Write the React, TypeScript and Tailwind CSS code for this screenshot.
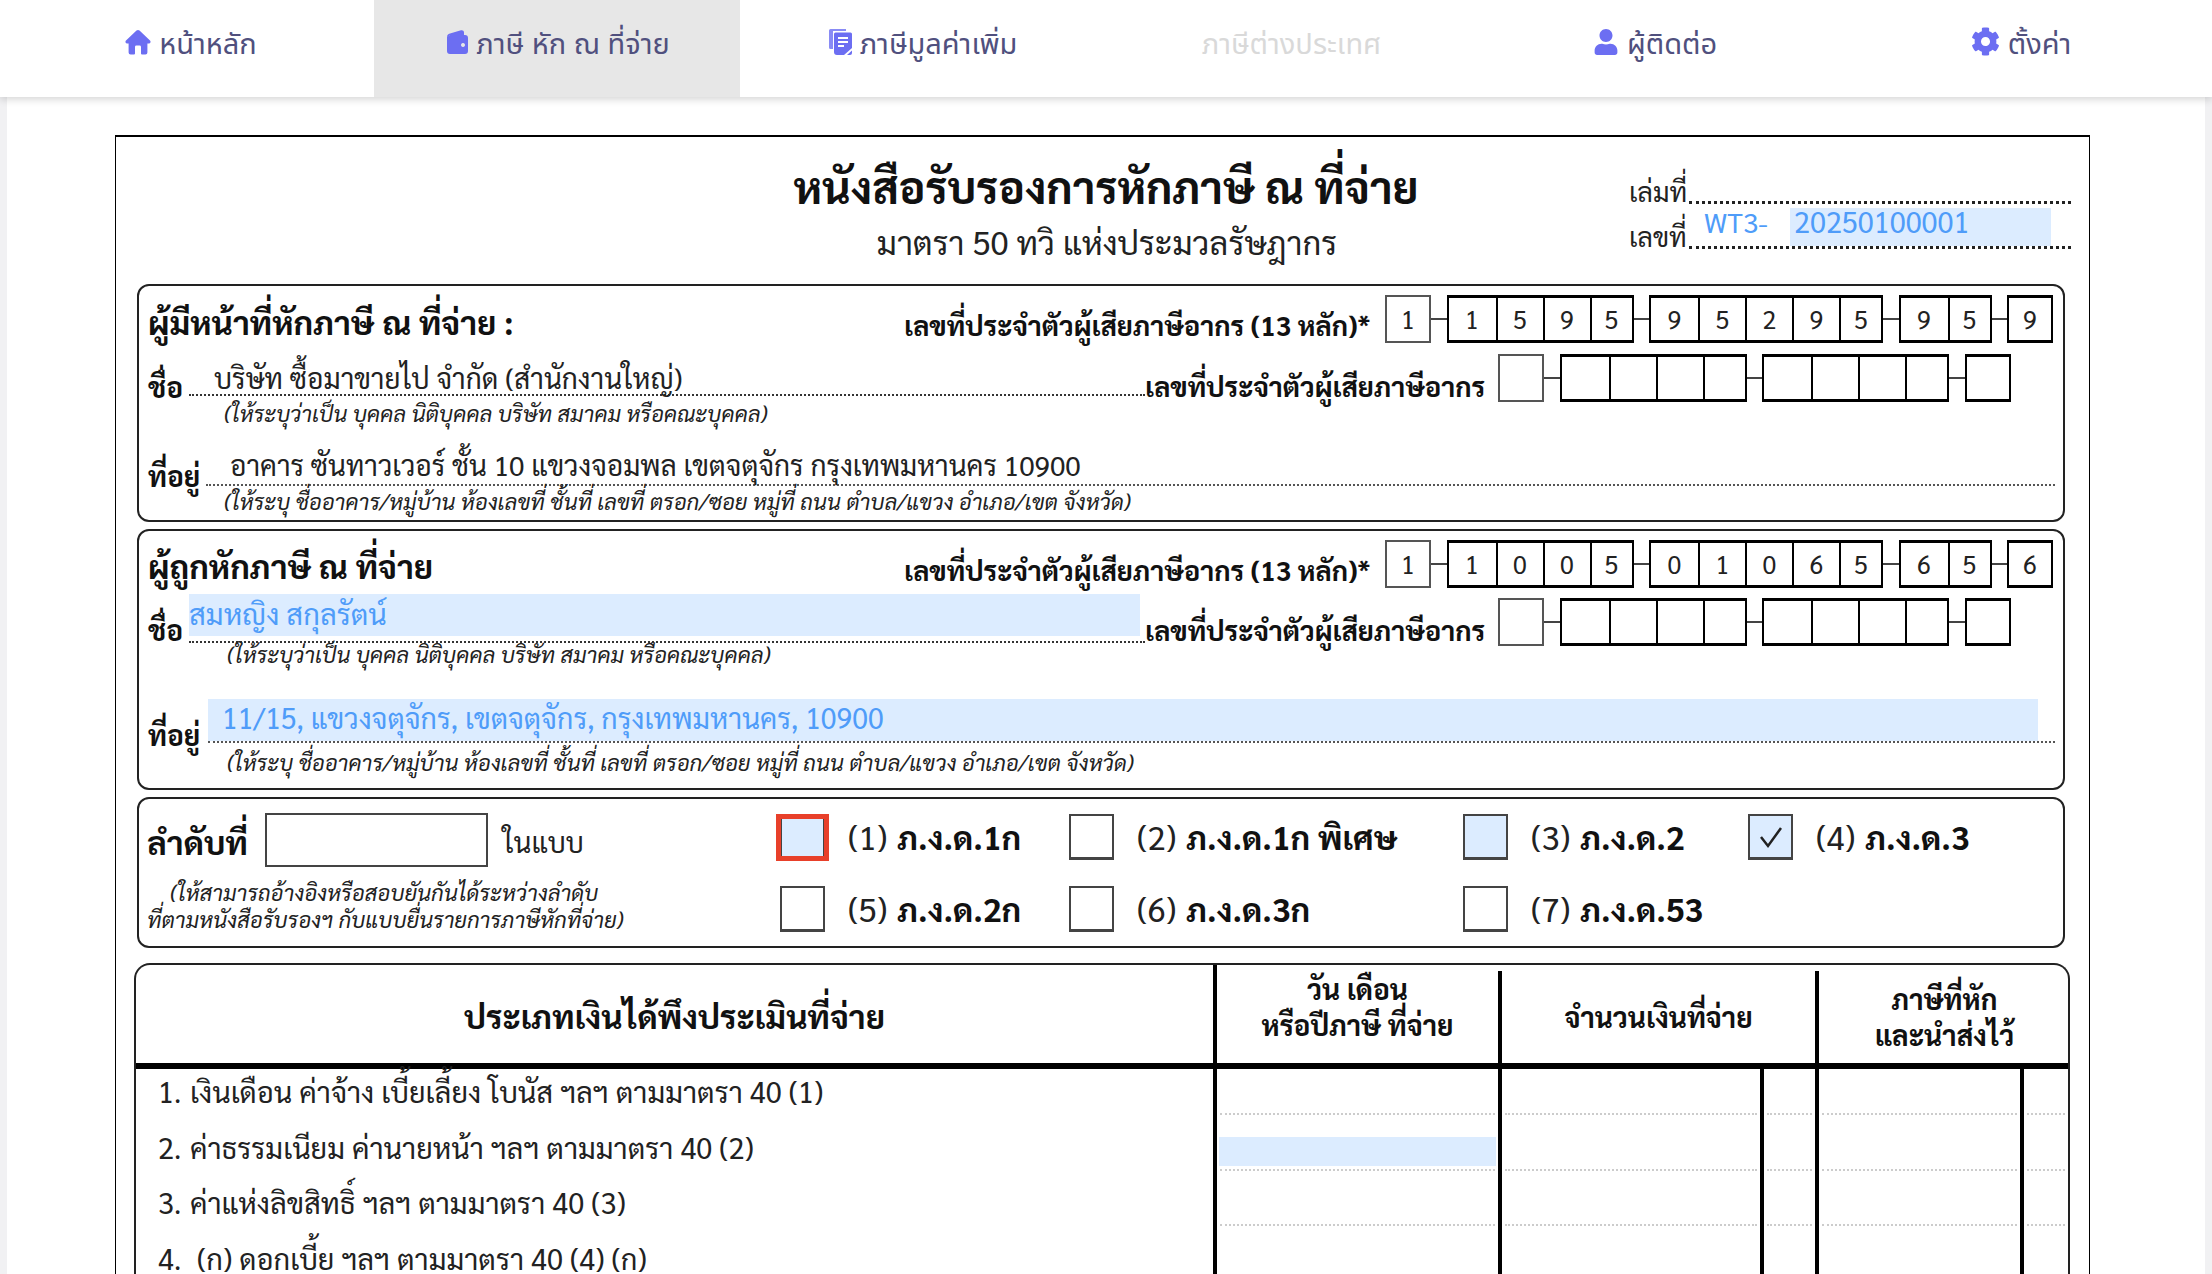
import { FaCog, FaUser } from 'react-icons/fa'

const formFont = { fontFamily: '"Sarabun", "Noto Sans", sans-serif' }
const navFont = { fontFamily: '"Noto Sans Thai", "Noto Sans", sans-serif' }

function HomeIcon() {
  return (
    <svg viewBox="0 0 26 26" className="h-[26px] w-[26px]" fill="#6c6ef2">
      <path d="M11.5 1.6 a2.2 2.2 0 0 1 3 0 L25 11.6 a1.6 1.6 0 0 1 -1.1 2.8 H22.4 V23.6 a2 2 0 0 1 -2 2 H17 a1 1 0 0 1 -1 -1 V18 a1.4 1.4 0 0 0 -1.4 -1.4 H11.4 A1.4 1.4 0 0 0 10 18 V24.6 a1 1 0 0 1 -1 1 H5.6 a2 2 0 0 1 -2 -2 V14.4 H2.1 A1.6 1.6 0 0 1 1 11.6 Z" />
    </svg>
  )
}

function WalletIcon() {
  return (
    <svg viewBox="0 0 21 24" className="h-[24px] w-[21px]" fill="#6c6ef2">
      <path d="M0 7 C0 5 1 4 3 3.4 L14 0.3 C15.6 -0.1 17 0.8 17 2.5 V5 H3.5 C2.5 5 2 5.6 2.5 6 Z" />
      <path fillRule="evenodd" d="M3 5 H18 a3 3 0 0 1 3 3 V21 a3 3 0 0 1 -3 3 H3 a3 3 0 0 1 -3 -3 V7 Z M16 13 a2 2 0 1 0 0.01 0 Z" />
    </svg>
  )
}

function DocsIcon() {
  return (
    <svg viewBox="0 0 23 26" className="h-[26px] w-[23px]" fill="#6c6ef2">
      <path d="M1.5 0 H17 V2 H4 V20 H1.5 A1.5 1.5 0 0 1 0 18.5 V1.5 A1.5 1.5 0 0 1 1.5 0 Z" opacity="0.8" />
      <path fillRule="evenodd" d="M6.5 3.5 H21.5 A1.5 1.5 0 0 1 23 5 V19 L15 26 H8 A3 3 0 0 1 5 23 V5 A1.5 1.5 0 0 1 6.5 3.5 Z M9 8 V10 H19 V8 Z M9 12 V14 H19 V12 Z M9 16 V18 H15 V16 Z" />
      <path d="M18 26 L23 21.5 V24 A2 2 0 0 1 21 26 Z" />
    </svg>
  )
}

const tabs = [
  { label: 'หน้าหลัก', icon: <HomeIcon /> },
  { label: 'ภาษี หัก ณ ที่จ่าย', icon: <WalletIcon />, active: true },
  { label: 'ภาษีมูลค่าเพิ่ม', icon: <DocsIcon /> },
  { label: 'ภาษีต่างประเทศ', disabled: true },
  { label: 'ผู้ติดต่อ', icon: <FaUser className="text-[26px] text-[#6c6ef2]" /> },
  { label: 'ตั้งค่า', icon: <FaCog className="text-[29px] text-[#6c6ef2]" /> },
]

function DigitBoxes({ groups, digits }: { groups: number[]; digits: string }) {
  let at = 0
  return (
    <div className="flex items-center">
      {groups.map((n, i) => {
        const chunk = digits.slice(at, at + n).padEnd(n, ' ')
        at += n
        return (
          <div key={i} className="flex items-center">
            {i > 0 && <div className="h-[2px] w-[15.5px] bg-[#444]" />}
            <div
              className={
                i === 0
                  ? 'flex h-[48px] border-2 border-[#555]'
                  : 'flex h-[48px] border-x-2 border-y-[3px] border-black'
              }
            >
              {chunk.split('').map((d, j) => (
                <div
                  key={j}
                  className={`flex items-center justify-center text-[25px] text-[#222] ${j === n - 1 ? 'w-[42px]' : 'w-[47px]'} ${j > 0 ? 'border-l-2 border-black' : ''}`}
                >
                  {d}
                </div>
              ))}
            </div>
          </div>
        )
      })}
    </div>
  )
}

function Hint({ text, left }: { text: string; left: string }) {
  return <div className={`text-[22px] italic leading-[30px] text-[#222] ${left}`}>{text}</div>
}

function Check({ label, sub, blue, checked, focus }: { label: string; sub: string; blue?: boolean; checked?: boolean; focus?: boolean }) {
  return (
    <div className="flex items-center">
      <div className="relative">
        <div
          className={`flex h-[46px] w-[45px] items-center justify-center border-2 border-b-[3px] border-[#444] ${blue ? 'bg-[#dcecff]' : 'bg-white'}`}
        >
          {checked && (
            <svg viewBox="0 0 30 30" className="h-[30px] w-[30px]" fill="none" stroke="#222" strokeWidth="2.5">
              <path d="M5 15 L12 24 L25 6" />
            </svg>
          )}
        </div>
        {focus && <div className="absolute -inset-x-[4px] top-0 -bottom-[1px] border-[5px] border-[#e8402a]" />}
      </div>
      <span className="ml-[23px] text-[33px] leading-[46px] text-[#222]">{label}</span>
      <span className="ml-[10px] text-[33px] font-bold leading-[46px] text-[#111]">{sub}</span>
    </div>
  )
}

function Row({ no, text, cell, h }: { no: string; text: string; cell?: boolean; h: string }) {
  const dots = 'border-b-2 border-dotted border-[#ccc]'
  return (
    <div className={`flex ${h}`}>
      <div className="flex w-[1077px] items-end pb-[4px] pl-[22px] text-[29px] leading-[40px] text-[#222]">
        <span className="w-[32px]">{no}</span>
        <span className="whitespace-pre">{text}</span>
      </div>
      <div className="flex w-[285px] flex-col justify-end border-l-[4px] border-black px-[3px]">
        {cell && <div className="-mx-[1px] mb-[3px] h-[29px] bg-[#dcecff]" />}
        <div className={dots} />
      </div>
      <div className="flex w-[262px] flex-col justify-end border-l-[4px] border-black px-[3px]">
        <div className={dots} />
      </div>
      <div className="flex w-[55px] flex-col justify-end border-l-[4px] border-black px-[3px]">
        <div className={dots} />
      </div>
      <div className="flex w-[205px] flex-col justify-end border-l-[4px] border-black px-[3px]">
        <div className={dots} />
      </div>
      <div className="flex flex-1 flex-col justify-end border-l-[4px] border-black px-[3px]">
        <div className={dots} />
      </div>
    </div>
  )
}

export default function App() {
  return (
    <div className="flex h-screen flex-col overflow-hidden bg-[#f1f1f3] text-black" style={formFont}>
      <nav className="z-10 flex h-[97px] shrink-0 bg-white px-[8px] shadow-[0_2px_8px_rgba(0,0,0,0.18)]" style={navFont}>
        {tabs.map((t) => (
          <div
            key={t.label}
            className={`flex w-[366px] items-center justify-center gap-[8px] pb-[6px] text-[29px] ${t.active ? 'bg-[#e7e7e7] pl-[3px]' : ''} ${t.disabled ? 'pl-[5px] text-[#d9d9d9]' : 'text-[#50507e]'}`}
          >
            {t.icon && <span className="-mt-[8px]">{t.icon}</span>}
            <span>{t.label}</span>
          </div>
        ))}
      </nav>

      <main className="mx-[7px] flex-1 overflow-hidden bg-white pl-[108px] pt-[38px]">
        <div className="h-[1200px] w-[1975px] border border-t-2 border-black">
          <header className="flex h-[147px]">
            <div className="ml-[467px] flex w-[1046px] flex-col items-center">
              <h1 className="mt-[19px] text-[44.3px] font-bold leading-[60px] text-[#111]">หนังสือรับรองการหักภาษี ณ ที่จ่าย</h1>
              <p className="mt-[4px] pl-[2px] text-[32.8px] leading-[44px] text-[#222]">มาตรา 50 ทวิ แห่งประมวลรัษฎากร</p>
            </div>
            <div className="w-[442px] pt-[30px] text-[27px] text-[#222]">
              <div className="flex h-[37px] items-end">
                <span className="w-[60px] translate-y-[4px] leading-[34px]">เล่มที่</span>
                <div className="flex-1 border-b-[3px] border-dotted border-[#222]" />
              </div>
              <div className="flex h-[45px] items-end">
                <span className="w-[60px] translate-y-[4px] leading-[34px]">เลขที่</span>
                <div className="flex h-full flex-1 border-b-[3px] border-dotted border-[#222] pl-[15px] pt-[4px] text-[#4f9cf9]">
                  <span className="w-[86px] text-[28px] leading-[26px]">WT3-</span>
                  <span className="h-[38px] w-[261px] bg-[#dcecff] pl-[4px] text-[29px] leading-[26px]">20250100001</span>
                </div>
              </div>
            </div>
          </header>

          {/* ผู้จ่าย */}
          <section className="ml-[21px] h-[238px] w-[1928px] rounded-[12px] border-2 border-[#222] pl-[9px]">
            <div className="mt-[9px] flex h-[48px] items-center">
              <h2 className="mt-[6px] w-[756px] text-[33px] font-bold leading-[48px] text-[#111]">ผู้มีหน้าที่หักภาษี ณ ที่จ่าย :</h2>
              <span className="mt-[12px] w-[481px] text-[27.4px] font-bold text-[#111]">เลขที่ประจำตัวผู้เสียภาษีอากร (13 หลัก)*</span>
              <DigitBoxes groups={[1, 4, 5, 2, 1]} digits="1159595295959" />
            </div>
            <div className="mt-[11px] flex h-[48px] items-start">
              <span className="mt-[12px] w-[41px] text-[28px] font-bold leading-[40px] text-[#111]">ชื่อ</span>
              <div className="h-[42px] w-[956px] border-b-2 border-dotted border-[#333] pl-[25px] pt-[3px] text-[28px] leading-[40px] text-[#222]">บริษัท ซื้อมาขายไป จำกัด (สำนักงานใหญ่)</div>
              <span className="mt-[12px] w-[353px] text-[27.4px] font-bold leading-[40px] text-[#111]">เลขที่ประจำตัวผู้เสียภาษีอากร</span>
              <DigitBoxes groups={[1, 4, 4, 1]} digits="" />
            </div>
            <Hint text="(ให้ระบุว่าเป็น บุคคล นิติบุคคล บริษัท สมาคม หรือคณะบุคคล)" left="-mt-[4px] ml-[76px]" />
            <div className="mt-[18px] flex h-[40px]">
              <span className="mt-[7px] w-[58px] text-[28px] font-bold leading-[44px] text-[#111]">ที่อยู่</span>
              <div className="h-[40px] w-[1849px] border-b-2 border-dotted border-[#555] pl-[24px] text-[28px] leading-[36px] text-[#222]">อาคาร ซันทาวเวอร์ ชั้น 10 แขวงจอมพล เขตจตุจักร กรุงเทพมหานคร 10900</div>
            </div>
            <Hint text="(ให้ระบุ ชื่ออาคาร/หมู่บ้าน ห้องเลขที่ ชั้นที่ เลขที่ ตรอก/ซอย หมู่ที่ ถนน ตำบล/แขวง อำเภอ/เขต จังหวัด)" left="ml-[76px]" />
          </section>

          {/* ผู้ถูกหัก */}
          <section className="ml-[21px] mt-[7px] h-[261px] w-[1928px] rounded-[12px] border-2 border-[#222] pl-[9px]">
            <div className="mt-[9px] flex h-[48px] items-center">
              <h2 className="mt-[4px] w-[756px] text-[33px] font-bold leading-[48px] text-[#111]">ผู้ถูกหักภาษี ณ ที่จ่าย</h2>
              <span className="mt-[12px] w-[481px] text-[27.4px] font-bold text-[#111]">เลขที่ประจำตัวผู้เสียภาษีอากร (13 หลัก)*</span>
              <DigitBoxes groups={[1, 4, 5, 2, 1]} digits="1100501065656" />
            </div>
            <div className="mt-[10px] flex h-[48px] items-start">
              <span className="mt-[11px] w-[41px] text-[28px] font-bold leading-[40px] text-[#111]">ชื่อ</span>
              <div className="-mt-[4px] h-[49px] w-[956px] border-b-2 border-dotted border-[#333]">
                <div className="h-[42px] w-[951px] bg-[#dcecff] text-[29px] leading-[38px] text-[#4f9cf9]">สมหญิง สกุลรัตน์</div>
              </div>
              <span className="mt-[12px] w-[353px] text-[27.4px] font-bold leading-[40px] text-[#111]">เลขที่ประจำตัวผู้เสียภาษีอากร</span>
              <DigitBoxes groups={[1, 4, 4, 1]} digits="" />
            </div>
            <Hint text="(ให้ระบุว่าเป็น บุคคล นิติบุคคล บริษัท สมาคม หรือคณะบุคคล)" left="-mt-[7px] ml-[79px]" />
            <div className="mt-[30px] flex h-[44px]">
              <span className="mt-[13px] w-[60px] text-[28px] font-bold leading-[44px] text-[#111]">ที่อยู่</span>
              <div className="h-[44px] w-[1847px] border-b-2 border-dotted border-[#555]">
                <div className="h-[42px] w-[1830px] bg-[#dcecff] pl-[14px] text-[28.5px] leading-[38px] text-[#4f9cf9]">11/15, แขวงจตุจักร, เขตจตุจักร, กรุงเทพมหานคร, 10900</div>
              </div>
            </div>
            <Hint text="(ให้ระบุ ชื่ออาคาร/หมู่บ้าน ห้องเลขที่ ชั้นที่ เลขที่ ตรอก/ซอย หมู่ที่ ถนน ตำบล/แขวง อำเภอ/เขต จังหวัด)" left="mt-[4px] ml-[79px]" />
          </section>

          {/* แบบ */}
          <section className="ml-[21px] mt-[7px] flex h-[151px] w-[1928px] rounded-[12px] border-2 border-[#222] pl-[8px]">
            <div className="w-[633px]">
              <div className="mt-[14px] flex h-[54px]">
                <span className="mt-[5px] w-[118px] text-[33px] font-bold leading-[48px] text-[#111]">ลำดับที่</span>
                <div className="h-[54px] w-[223px] border-2 border-[#444]" />
                <span className="ml-[15px] mt-[6px] text-[28px] leading-[44px] text-[#222]">ในแบบ</span>
              </div>
              <p className="mt-[12px] pl-[23px] text-[22px] italic leading-[27px] text-[#222]">(ให้สามารถอ้างอิงหรือสอบยันกันได้ระหว่างลำดับ</p>
              <p className="text-[22px] italic leading-[27px] text-[#222]">ที่ตามหนังสือรับรองฯ กับแบบยื่นรายการภาษีหักที่จ่าย)</p>
            </div>
            <div className="grid grid-cols-[289px_394px_285px_auto] content-start gap-y-[26px] pt-[15px]">
              <Check label="(1)" sub="ภ.ง.ด.1ก" blue focus />
              <Check label="(2)" sub="ภ.ง.ด.1ก พิเศษ" />
              <Check label="(3)" sub="ภ.ง.ด.2" blue />
              <Check label="(4)" sub="ภ.ง.ด.3" blue checked />
              <Check label="(5)" sub="ภ.ง.ด.2ก" />
              <Check label="(6)" sub="ภ.ง.ด.3ก" />
              <Check label="(7)" sub="ภ.ง.ด.53" />
            </div>
          </section>

          {/* ตาราง */}
          <section className="ml-[18px] mt-[15px] h-[400px] w-[1936px] rounded-t-[16px] border-x-2 border-t-2 border-[#222]">
            <div className="flex h-[98px] text-[28px] font-bold leading-[36px] text-[#111]">
              <div className="flex w-[1077px] items-center justify-center pt-[4px] text-[33px]">ประเภทเงินได้พึงประเมินที่จ่าย</div>
              <div className="flex w-[285px] flex-col items-center justify-center border-l-[4px] border-black pb-[16px] text-center">
                <span>วัน เดือน</span>
                <span>หรือปีภาษี ที่จ่าย</span>
              </div>
              <div className="mt-[6px] flex w-[317px] items-center justify-center border-l-[4px] border-black pb-[2px]">จำนวนเงินที่จ่าย</div>
              <div className="mt-[6px] flex flex-1 flex-col items-center justify-center border-l-[4px] border-black pb-[2px] pl-[2px]">
                <span>ภาษีที่หัก</span>
                <span>และนำส่งไว้</span>
              </div>
            </div>
            <div className="h-[6px] bg-black" />
            <Row no="1." text="เงินเดือน ค่าจ้าง เบี้ยเลี้ยง โบนัส ฯลฯ ตามมาตรา 40 (1)" h="h-[46px]" />
            <Row no="2." text="ค่าธรรมเนียม ค่านายหน้า ฯลฯ ตามมาตรา 40 (2)" h="h-[55.5px]" cell />
            <Row no="3." text="ค่าแห่งลิขสิทธิ์ ฯลฯ ตามมาตรา 40 (3)" h="h-[55.5px]" />
            <Row no="4." text=" (ก) ดอกเบี้ย ฯลฯ ตามมาตรา 40 (4) (ก)" h="h-[55.5px]" />
            <div className="flex h-[140px]">
              <div className="w-[1077px]" />
              <div className="w-[285px] border-l-[4px] border-black" />
              <div className="w-[262px] border-l-[4px] border-black" />
              <div className="w-[55px] border-l-[4px] border-black" />
              <div className="w-[205px] border-l-[4px] border-black" />
              <div className="flex-1 border-l-[4px] border-black" />
            </div>
          </section>
        </div>
      </main>
    </div>
  )
}
